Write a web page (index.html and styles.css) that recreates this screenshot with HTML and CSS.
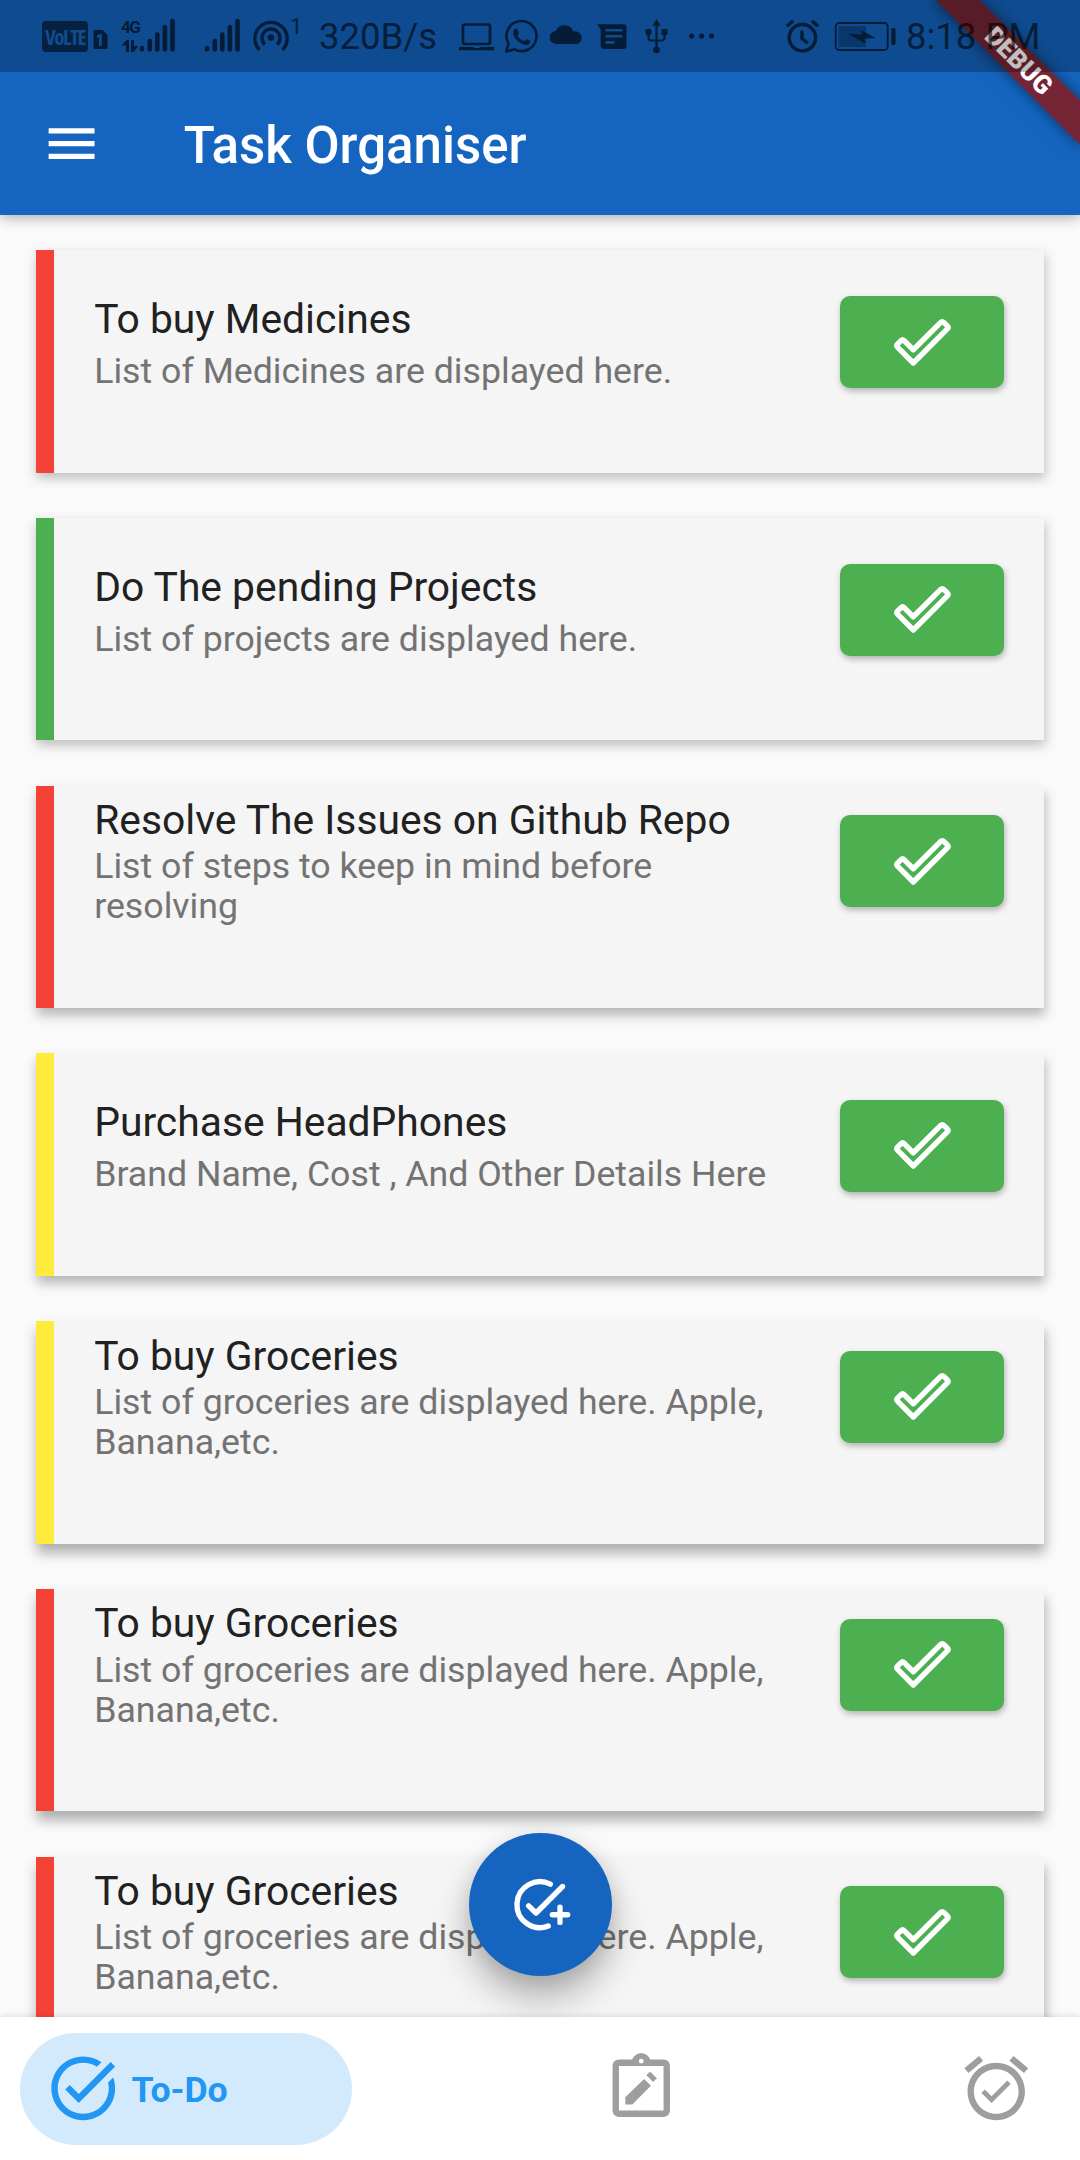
FILE: index.html
```html
<!DOCTYPE html>
<html lang="en">
<head>
<meta charset="utf-8">
<title>Task Organiser</title>
<link rel="stylesheet" href="styles.css">
</head>
<body>
<svg class="defs" width="0" height="0" aria-hidden="true">
  <symbol id="done" viewBox="0 0 24 24"><path d="M8.35 14.8L4.75 11.2Q4.15 10.6 3.55 11.2L2.15 12.6Q1.6 13.2 2.15 13.8L8.35 20L21.7 6.65Q22.3 6.05 21.7 5.45L20.3 4.05Q19.7 3.45 19.1 4.05Z" fill="none" stroke="#fff" stroke-width="2.1" stroke-linejoin="round"/></symbol>
</svg>
<div class="screen">
  <header class="top">
    <div class="debug"><span>DEBUG</span></div>
    <div class="status">
      <span class="volte">VoLTE</span>
      <svg class="sim" viewBox="93 0 15 72"><path fill-rule="evenodd" d="M95 30h7.500l5 5v12.500a1.500 1.500 0 0 1-1.500 1.500H95a1.500 1.500 0 0 1-1.500-1.500v-16a1.500 1.500 0 0 1 1.500-1.500zM97 35.500v2.500l2-.8V46h2.800V34h-2z"/></svg>
      <div class="net"><span>4G</span><svg viewBox="120 36 19 20"><path d="M120.500 45.500l5-5.500h2.500v12h-3v-6.500zM130 40h3v6h4.500l-5 6H130z"/></svg></div>
      <svg class="bars" viewBox="138 0 36 72"><path d="M141 48v1.200M148.800 41v8.500M156.300 34.500v15M163.900 27v22.500M171.500 21v28.500"/></svg>
      <svg class="bars second" viewBox="138 0 36 72"><path d="M141 48v1.200M148.800 41v8.500M156.300 34.500v15M163.900 27v22.500M171.500 21v28.500"/></svg>
      <svg class="hotspot" viewBox="252 0 36 72"><circle cx="270" cy="37.500" r="3.300"/><path fill="none" stroke="#000" stroke-width="3.400" d="M258.500 50a16.200 16.200 0 1 1 23 0M263.800 44.500a9 9 0 1 1 12.400 0"/></svg>
      <span class="one">1</span>
      <span class="speed">320B/s</span>
      <svg class="laptop" viewBox="459 0 36 72"><rect x="463" y="24.500" width="27" height="19.500" rx="2" fill="none" stroke="#000" stroke-width="2.700"/><path d="M459 47h14l1 1h6l1-1h13v3.300h-35z"/></svg>
      <svg class="whats" viewBox="504 0 35 72"><path fill="none" stroke="#000" stroke-width="2.600" stroke-linejoin="round" d="M506.300 51.500l2.200-7.900a15 15 0 1 1 5.900 5.700z"/><path d="M514.500 29.300c1.700-1.200 3-.4 3.400.9l1 2.800c.3.800-1.500 2.300-1.200 2.900 1.500 2.500 3.500 4.200 6.200 5.200.8.200 2-2.300 2.900-1.900l3.300 1.600c1 .6-.4 3.500-2.300 4-3 .9-6.800-.9-9.700-3.500-3-2.700-5.300-6.500-4.900-9.400.1-1 .7-2 1.300-2.600z"/></svg>
      <svg class="cloud" viewBox="550 0 33 72"><path d="M556.500 44a6.500 6.500 0 0 1-.7-13 9.500 9.500 0 0 1 17.700.6 6.300 6.300 0 0 1 3.500 12.400z"/></svg>
      <svg class="msg" viewBox="597 0 30 72"><path fill-rule="evenodd" d="M597 24.200h26.500a3 3 0 0 1 3 3V46a3 3 0 0 1-3 3h-19.800a3 3 0 0 1-3-3V29.500zM605.500 29v2.500h17V29zM605.500 35v2.500h17V35zM605.500 41v2.700h9V41z"/></svg>
      <svg class="usb" viewBox="645 0 24 72"><path d="M656.500 19l4.200 6.700h-8.400z"/><circle cx="656.500" cy="50" r="3.300"/><circle cx="648.500" cy="32" r="3.200"/><path d="M661.500 29h6v6h-6z"/><path fill="none" stroke="#000" stroke-width="2.200" d="M656.500 24v25M648.500 32v5.500q0 3 3 3h10q3 0 3-3V32"/></svg>
      <svg class="dots" viewBox="689 0 26 72"><circle cx="691.700" cy="36" r="2.600"/><circle cx="701.600" cy="36" r="2.600"/><circle cx="711.500" cy="36" r="2.600"/></svg>
      <svg class="alarm" viewBox="786 0 34 72"><g fill="none" stroke="#000" stroke-width="3.400" stroke-linecap="round"><circle cx="802.400" cy="37.700" r="13.200"/><path d="M802 32v6.500l4.800 4M788 25.300l4-3.500M817 25.300l-4-3.500"/></g></svg>
      <svg class="battery" viewBox="834 0 62 72"><rect x="835.700" y="23" width="52" height="27" rx="3.500" fill="none" stroke="#000" stroke-width="1.800"/><path opacity=".42" d="M838.500 26H866v21h-27.500z"/><path d="M848 34l14 .5L861 30l14.500 8-11 .5.800 5z"/><rect x="891.300" y="28" width="4.200" height="17" rx="1.500"/></svg>
      <span class="time">8:18 PM</span>
    </div>
    <div class="appbar">
      <svg class="menu" viewBox="0 0 24 24"><path fill="#fff" d="M3 18h18v-2H3v2zm0-5h18v-2H3v2zm0-7v2h18V6H3z"/></svg>
      <h1>Task Organiser</h1>
    </div>
  </header>

  <main class="list">
    <article class="card red">
      <div class="text"><h2>To buy Medicines</h2><p>List of Medicines are displayed here.</p></div>
      <button class="ok"><svg><use href="#done"/></svg></button>
    </article>
    <article class="card green">
      <div class="text"><h2>Do The pending Projects</h2><p>List of projects are displayed here.</p></div>
      <button class="ok"><svg><use href="#done"/></svg></button>
    </article>
    <article class="card red long">
      <div class="text"><h2>Resolve The Issues on Github Repo</h2><p>List of steps to keep in mind before<br>resolving</p></div>
      <button class="ok"><svg><use href="#done"/></svg></button>
    </article>
    <article class="card yellow">
      <div class="text"><h2>Purchase HeadPhones</h2><p>Brand Name, Cost , And Other Details Here</p></div>
      <button class="ok"><svg><use href="#done"/></svg></button>
    </article>
    <article class="card yellow long">
      <div class="text"><h2>To buy Groceries</h2><p>List of groceries are displayed here. Apple,<br>Banana,etc.</p></div>
      <button class="ok"><svg><use href="#done"/></svg></button>
    </article>
    <article class="card red long">
      <div class="text"><h2>To buy Groceries</h2><p>List of groceries are displayed here. Apple,<br>Banana,etc.</p></div>
      <button class="ok"><svg><use href="#done"/></svg></button>
    </article>
    <article class="card red long">
      <div class="text"><h2>To buy Groceries</h2><p>List of groceries are displayed here. Apple,<br>Banana,etc.</p></div>
      <button class="ok"><svg><use href="#done"/></svg></button>
    </article>
    <button class="fab"><svg viewBox="0 0 24 24"><path fill="none" stroke="#fff" stroke-width="2.100" stroke-linecap="round" stroke-linejoin="round" d="M16.200 4A9 9 0 1 0 15.400 20.400M7.700 12.500l2.900 2.800L21 4.900M20 13v6M17 16h6"/></svg></button>
  </main>

  <nav class="nav">
    <a class="pill"><svg viewBox="0 0 24 24"><path d="M22 5.180L10.590 16.600l-4.240-4.240 1.410-1.410 2.830 2.830 10-10L22 5.180zm-2.210 5.040c.13.570.21 1.170.21 1.780 0 4.420-3.580 8-8 8s-8-3.580-8-8 3.580-8 8-8c1.580 0 3.040.46 4.280 1.250l1.440-1.440C16.100 2.670 14.130 2 12 2 6.480 2 2 6.480 2 12s4.480 10 10 10 10-4.480 10-10c0-1.190-.22-2.330-.6-3.390l-1.610 1.610z"/></svg><span>To-Do</span></a>
    <a class="item"><svg viewBox="0 0 24 24"><path fill-rule="evenodd" d="M19 3h-4.180C14.400 1.840 13.300 1 12 1s-2.400.84-2.820 2H5c-1.100 0-2 .9-2 2v14c0 1.100.9 2 2 2h14c1.100 0 2-.9 2-2V5c0-1.100-.9-2-2-2zm-7-.25a.75.75 0 1 1 0 1.500.75.75 0 0 1 0-1.500zM19 19H5V5h14z"/><path d="M7 14.860V17.100h2.200l5.820-5.900-2.120-2.120zM17 9l-2-2q-.3-.2-.6.100l-.8.800 2.120 2.120.9-.9z"/></svg></a>
    <a class="item last"><svg viewBox="0 0 24 24"><path d="M22 5.720l-4.600-3.860-1.290 1.530 4.600 3.860L22 5.720zM7.880 3.390L6.600 1.860 2 5.710l1.290 1.530 4.590-3.850zM12 4c-4.970 0-9 4.030-9 9s4.020 9 9 9c4.970 0 9-4.030 9-9s-4.030-9-9-9zm0 16c-3.870 0-7-3.130-7-7s3.130-7 7-7 7 3.130 7 7-3.130 7-7 7zm-1.460-5.470L8.410 12.400l-1.060 1.060 3.180 3.180 6-6-1.060-1.060-4.930 4.950z"/></svg></a>
  </nav>
</div>
</body>
</html>
```

FILE: styles.css
```css
* { box-sizing: border-box; }
body { margin: 0; font-family: Roboto, "Liberation Sans", sans-serif; }
.defs { display: block; position: absolute; }
.screen { width: 1080px; height: 2160px; display: flex; flex-direction: column; background: #fafafa; overflow: hidden; }

.top { position: relative; z-index: 2; height: 215px; flex: none; display: flex; flex-direction: column; background: #1565c0; box-shadow: 0 3px 12px rgba(0,0,0,.3); }
.status { position: relative; z-index: 2; height: 72px; flex: none; display: flex; background: rgba(0,0,0,.25); white-space: nowrap; }
.status > * { flex: none; }
.status > svg { height: 72px; display: block; opacity: .62; }
.volte { margin: 21px 0 0 42px; width: 46px; height: 31px; border-radius: 4px; background: #062040; color: #104d90; font: bold 21px/33px "Open Sans", sans-serif; font-stretch: condensed; letter-spacing: -1.5px; display: flex; justify-content: center; }
.sim { width: 15px; margin-left: 5px; }
.net { width: 19px; margin-left: 13px; padding-top: 18px; opacity: .62; display: flex; flex-direction: column; font: bold 17px/18px Roboto, sans-serif; letter-spacing: -1.5px; }
.net svg { width: 19px; height: 20px; }
.bars { width: 36px; margin-left: -1px; }
.bars path { stroke: #000; stroke-width: 4.6; stroke-linecap: round; }
.bars.second { margin-left: 29px; }
.hotspot { width: 36px; margin-left: 13px; }
.one { margin-left: 1px; width: 11px; font-size: 22px; line-height: 54px; color: rgba(0,0,0,.62); }
.speed { margin-left: 18px; width: 116px; font-size: 36.500px; line-height: 74px; color: rgba(0,0,0,.62); }
.laptop { width: 36px; margin-left: 24px; }
.whats { width: 35px; margin-left: 9px; }
.cloud { width: 33px; margin-left: 11px; }
.msg { width: 30px; margin-left: 14px; }
.usb { width: 24px; margin-left: 18px; }
.dots { width: 26px; margin-left: 20px; }
.alarm { width: 34px; margin-left: 71px; }
.battery { width: 62px; margin-left: 14px; }
.time { margin-left: 10px; font-size: 36.500px; line-height: 74px; color: rgba(0,0,0,.62); }

.debug { position: absolute; z-index: 1; top: 0; right: 0; width: 200px; height: 200px; overflow: hidden; }
.debug span { position: absolute; left: 98px; top: 71.400px; width: 204px; height: 30.600px; transform: rotate(45deg); transform-origin: 102px -71.400px; background: rgba(141,22,22,.81); box-shadow: 0 0 15px rgba(0,0,0,.5); color: #fff; font-size: 26px; font-weight: 900; line-height: 31px; text-align: center; }

.appbar { flex: 1; display: flex; align-items: center; padding-left: 41px; }
.menu { width: 61.200px; height: 61.200px; }
.appbar h1 { margin: 4px 0 0 81.500px; font-size: 51px; line-height: 60px; font-weight: 500; color: #fff; }

.list { position: relative; flex: 1; min-height: 0; overflow: hidden; padding: 35.200px 35.700px 0; display: flex; flex-direction: column; gap: 45.250px; }
.card { flex: none; height: 222.500px; display: flex; align-items: flex-start; justify-content: space-between; background: #f5f5f5; border-left: 18.300px solid; padding: 44.900px 40.500px 0 40.500px; box-shadow: 1px 5px 11px rgba(0,0,0,.25); }
.card:nth-child(3), .card:nth-child(4) { box-shadow: 1px 7px 11px rgba(0,0,0,.28); }
.card:nth-child(n+5) { box-shadow: 1px 9px 12px rgba(0,0,0,.31); }
.red { border-left-color: #f44336; }
.green { border-left-color: #4caf50; }
.yellow { border-left-color: #ffeb3b; }
.card h2 { margin: 0; font-size: 40.800px; line-height: 48px; font-weight: 400; color: #212121; white-space: nowrap; }
.card p { margin: 7.700px 0 0; font-size: 35.700px; line-height: 40px; color: #737373; white-space: nowrap; }
.long { padding-top: 10.400px; }
.long p { margin-top: 2.200px; }
.ok { flex: none; width: 163.500px; height: 92px; margin-top: 1.200px; padding: 0 0 0 1px; border: 0; border-radius: 10px; background: #4caf50; display: flex; align-items: center; justify-content: center; box-shadow: 1px 3px 6px rgba(0,0,0,.28); }
.long .ok { margin-top: 19.300px; }
.ok svg { width: 61.200px; height: 61.200px; }

.fab { position: absolute; left: 468.500px; bottom: 41px; width: 143px; height: 143px; border: 0; border-radius: 50%; background: #1565c0; padding: 0; display: flex; align-items: center; justify-content: center; box-shadow: 0 22px 36px rgba(0,0,0,.28), 0 4px 20px rgba(0,0,0,.1); }
.fab svg { width: 61.200px; height: 61.200px; }

.nav { position: relative; flex: none; height: 143px; background: #fff; display: flex; align-items: center; padding: 0 46px 0 20.400px; box-shadow: 0 -1px 6px rgba(0,0,0,.12); }
.nav svg { width: 76.500px; height: 76.500px; display: block; }
.pill { width: 331.500px; height: 112px; border-radius: 56px; background: #d3e9fc; display: flex; align-items: center; padding-left: 24.600px; color: #2196f3; fill: #2196f3; font-size: 35.700px; font-weight: 700; }
.pill span { margin: 2px 0 0 10px; letter-spacing: -.1px; }
.item { fill: #9e9e9e; margin-left: 251.200px; }
.item.last { margin-left: auto; }
```
